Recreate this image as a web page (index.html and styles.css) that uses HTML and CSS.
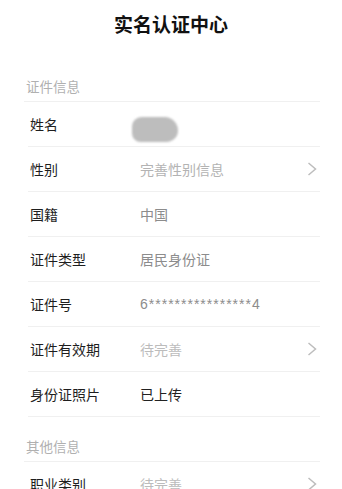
FILE: index.html
```html
<!DOCTYPE html>
<html lang="zh-CN">
<head>
<meta charset="utf-8">
<title>实名认证中心</title>
<link rel="stylesheet" href="styles.css">
</head>
<body>
<div class="page">
  <div class="title">实名认证中心</div>
  <div class="list">
    <div class="section">证件信息</div>
    <div class="row"><span class="label">姓名</span><span class="value"><span class="blur"></span></span></div>
    <div class="row"><span class="label">性别</span><span class="value v-light">完善性别信息</span><span class="chev"><svg viewBox="0 0 10 14" width="10" height="14"><path d="M1.5 1 L8.5 7 L1.5 13" fill="none" stroke="#bdbdbd" stroke-width="1.5"/></svg></span></div>
    <div class="row"><span class="label">国籍</span><span class="value v-mid">中国</span></div>
    <div class="row"><span class="label">证件类型</span><span class="value v-mid">居民身份证</span></div>
    <div class="row"><span class="label">证件号</span><span class="value v-mid id">6****************4</span></div>
    <div class="row"><span class="label">证件有效期</span><span class="value v-pale">待完善</span><span class="chev"><svg viewBox="0 0 10 14" width="10" height="14"><path d="M1.5 1 L8.5 7 L1.5 13" fill="none" stroke="#bdbdbd" stroke-width="1.5"/></svg></span></div>
    <div class="row"><span class="label">身份证照片</span><span class="value v-dark">已上传</span></div>
    <div class="section">其他信息</div>
    <div class="row"><span class="label">职业类别</span><span class="value v-pale">待完善</span><span class="chev"><svg viewBox="0 0 10 14" width="10" height="14"><path d="M1.5 1 L8.5 7 L1.5 13" fill="none" stroke="#bdbdbd" stroke-width="1.5"/></svg></span></div>
  </div>
</div>
</body>
</html>
```

FILE: styles.css
```css
html, body {
  margin: 0;
  padding: 0;
  background: #ffffff;
}
body {
  font-family: "Noto Sans CJK SC", "Noto Sans", "Liberation Sans", sans-serif;
  color: #222;
  width: 342px;
  height: 489px;
  overflow: hidden;
}
.page {
  display: flex;
  flex-direction: column;
}
.title {
  height: 48px;
  line-height: 48px;
  margin-bottom: 9px;
  text-align: center;
  font-size: 19px;
  font-weight: 700;
  color: #111;
}
.list {
  display: flex;
  flex-direction: column;
  margin: 0 22px 0 24px;
}
.section {
  height: 45px;
  display: flex;
  align-items: flex-end;
  padding: 0 0 8px 2px;
  box-sizing: border-box;
  font-size: 13.5px;
  line-height: 14px;
  color: #b0b0b0;
  border-bottom: 1px solid #f0f0f0;
}
.row {
  height: 45px;
  box-sizing: border-box;
  display: flex;
  align-items: center;
  margin-left: 4px;
  padding-left: 2px;
  border-bottom: 1px solid #f0f0f0;
  font-size: 14px;
}
.label {
  width: 110px;
  flex: none;
  color: #1e1e1e;
}
.value {
  flex: 1;
  display: flex;
  align-items: center;
}
.v-light { color: #b3b3b3; }
.v-pale { color: #bcbcbc; }
.v-mid { color: #8c8c8c; }
.v-dark { color: #222; }
.id {
  font-family: "Liberation Sans", sans-serif;
  font-size: 14px;
  letter-spacing: 1px;
}
.blur {
  display: block;
  width: 46px;
  height: 25px;
  margin-left: -8px;
  margin-top: 10px;
  border-radius: 10px 14px 12px 9px;
  background: #bdbdbd;
  filter: blur(1.2px);
}
.chev {
  flex: none;
  display: flex;
  align-items: center;
  margin-right: 3px;
}
```
